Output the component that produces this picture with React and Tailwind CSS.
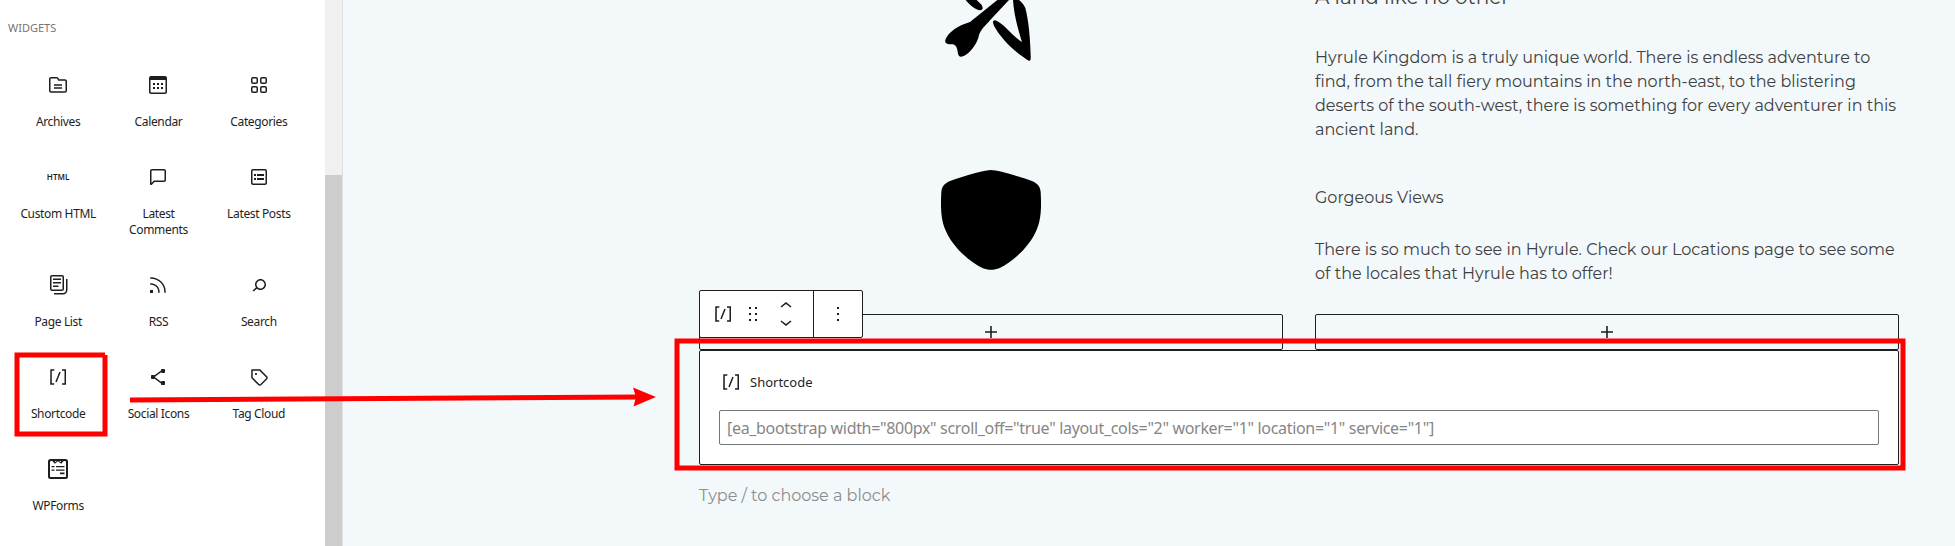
const ICONS = {
  archives: "M19 6.2h-5.9l-.6-1.1c-.3-.7-1-1.1-1.8-1.1H5c-1.1 0-2 .9-2 2v11.8c0 1.1.9 2 2 2h14c1.1 0 2-.9 2-2V8.2c0-1.1-.9-2-2-2zm.5 11.6c0 .3-.2.5-.5.5H5c-.3 0-.5-.2-.5-.5V6c0-.3.2-.5.5-.5h5.8c.2 0 .4.1.4.3l1 2H19c.3 0 .5.2.5.5v9.5zM8 12.8h8v-1.5H8v1.5zm0 3h8v-1.5H8v1.5z",
  calendar: "M19 3H5c-1.1 0-2 .9-2 2v14c0 1.1.9 2 2 2h14c1.1 0 2-.9 2-2V5c0-1.1-.9-2-2-2zm.5 16c0 .3-.2.5-.5.5H5c-.3 0-.5-.2-.5-.5V7h15v12zM9 10H7v2h2v-2zm0 4H7v2h2v-2zm4-4h-2v2h2v-2zm4 0h-2v2h2v-2zm-4 4h-2v2h2v-2zm4 0h-2v2h2v-2z",
  categories: "M6 5.5h3a.5.5 0 01.5.5v3a.5.5 0 01-.5.5H6a.5.5 0 01-.5-.5V6a.5.5 0 01.5-.5zM4 6a2 2 0 012-2h3a2 2 0 012 2v3a2 2 0 01-2 2H6a2 2 0 01-2-2V6zm11-.5h3a.5.5 0 01.5.5v3a.5.5 0 01-.5.5h-3a.5.5 0 01-.5-.5V6a.5.5 0 01.5-.5zM13 6a2 2 0 012-2h3a2 2 0 012 2v3a2 2 0 01-2 2h-3a2 2 0 01-2-2V6zm5 8.5h-3a.5.5 0 00-.5.5v3a.5.5 0 00.5.5h3a.5.5 0 00.5-.5v-3a.5.5 0 00-.5-.5zM15 13a2 2 0 00-2 2v3a2 2 0 002 2h3a2 2 0 002-2v-3a2 2 0 00-2-2h-3zm-9 1.5h3a.5.5 0 01.5.5v3a.5.5 0 01-.5.5H6a.5.5 0 01-.5-.5v-3a.5.5 0 01.5-.5zM4 15a2 2 0 012-2h3a2 2 0 012 2v3a2 2 0 01-2 2H6a2 2 0 01-2-2v-3z",
  comment: "M18 4H6c-1.1 0-2 .9-2 2v12.9c0 .6.5 1.1 1.1 1.1.3 0 .5-.1.8-.3L8.5 17H18c1.1 0 2-.9 2-2V6c0-1.1-.9-2-2-2zm.5 11c0 .3-.2.5-.5.5H7.9l-2.4 2.4V6c0-.3.2-.5.5-.5h12c.3 0 .5.2.5.5v9z",
  posts: "M18 4H6c-1.1 0-2 .9-2 2v12c0 1.1.9 2 2 2h12c1.1 0 2-.9 2-2V6c0-1.1-.9-2-2-2zm.5 14c0 .3-.2.5-.5.5H6c-.3 0-.5-.2-.5-.5V6c0-.3.2-.5.5-.5h12c.3 0 .5.2.5.5v12zM7 11h2V9H7v2zm0 4h2v-2H7v2zm3-4h7V9h-7v2zm0 4h7v-2h-7v2z",
  pages: "M7 5.5h8V7H7V5.5zM7 9h8v1.5H7V9zm0 3.5h5.5V14H7v-1.5zM16 2H6a2 2 0 00-2 2v12c0 1.1.9 2 2 2h10a2 2 0 002-2V4a2 2 0 00-2-2zM6 3.5h10a.5.5 0 01.5.5v12a.5.5 0 01-.5.5H6a.5.5 0 01-.5-.5V4a.5.5 0 01.5-.5zM20 6v11c0 1.7-1.3 3-3 3H8v1.5h9c2.5 0 4.5-2 4.5-4.5V6H20z",
  rss: "M5 10.2h-.8v1.5H5c1.9 0 3.8.8 5.1 2.1 1.4 1.4 2.1 3.2 2.1 5.1v.8h1.5V19c0-2.3-.9-4.5-2.6-6.2-1.6-1.6-3.8-2.6-6.1-2.6zm10.4-1.6C12.6 5.8 8.9 4.2 5 4.2h-.8v1.5H5c3.5 0 6.9 1.4 9.4 3.9s3.9 5.8 3.9 9.4v.8h1.5V19c0-3.9-1.6-7.6-4.4-10.4zM4 20h3v-3H4v3z",
  search: "M13.5 6C10.5 6 8 8.5 8 11.5c0 1.1.3 2.1.9 3l-3.4 3 1 1.1 3.4-2.9c1 .9 2.2 1.4 3.6 1.4 3 0 5.5-2.5 5.5-5.5C19 8.5 16.5 6 13.5 6zm0 9.5c-2.2 0-4-1.8-4-4s1.8-4 4-4 4 1.8 4 4-1.8 4-4 4z",
  shortcode: "M16 4.2v1.5h2.5v12.5H16v1.5h4V4.2h-4zM4.2 19.8h4v-1.5H5.8V5.8h2.5V4.2h-4l-.1 15.6zm5.1-3.1l1.4.6 4-10-1.4-.6-4 10z",
  share: "M9 11.8l6.1-4.5c.1.4.4.7.9.7h2c.6 0 1-.4 1-1V5c0-.6-.4-1-1-1h-2c-.6 0-1 .4-1 1v.4l-6.4 4.8c-.2-.1-.4-.2-.6-.2H6c-.6 0-1 .4-1 1v2c0 .6.4 1 1 1h2c.2 0 .4-.1.6-.2l6.4 4.8v.4c0 .6.4 1 1 1h2c.6 0 1-.4 1-1v-2c0-.6-.4-1-1-1h-2c-.5 0-.8.3-.9.7L9 12.2v-.4z",
  tag: "M20.1 11.2l-6.7-6.7c-.1-.1-.3-.2-.5-.2H5c-.4-.1-.8.3-.8.7v7.8c0 .2.1.4.2.5l6.7 6.7c.2.2.5.4.7.5s.6.2.9.2c.3 0 .6-.1.9-.2.3-.1.5-.3.8-.5l5.6-5.6c.4-.4.7-1 .7-1.6.1-.6-.2-1.2-.6-1.6zM19 13.4L13.4 19c-.1.1-.2.1-.3.2-.2.1-.4.1-.6 0-.1 0-.2-.1-.3-.2l-6.5-6.5V5.8h6.8l6.5 6.5c.2.2.2.4.2.6 0 .1 0 .3-.2.5zM9 8c-.6 0-1 .4-1 1s.4 1 1 1 1-.4 1-1-.4-1-1-1z",
  forms: "M4.5 2h15A2.5 2.5 0 0122 4.5v15a2.5 2.5 0 01-2.5 2.5h-15A2.5 2.5 0 012 19.5v-15A2.5 2.5 0 014.5 2zM4 5v14.5c0 .3.2.5.5.5h15c.3 0 .5-.2.5-.5V5l-.7-1h-1.6l-2.5 2.7L12 4.3 8.800 6.700 6.300 4H4.700zM8.600 4.100L9.400 5l1.400-1zM13.200 4l1.400 1 .8-.9zM5.500 9h3v1.300h-3zM10 9h8.500v1.300H10zM5.500 12.500h3v1.300h-3zM10 12.500h8.500v1.300H10zM14 15.500h4.500v1.700H14z",
  drag: "M8 7h2V5H8v2zm0 6h2v-2H8v2zm0 6h2v-2H8v2zm6-14v2h2V5h-2zm0 8h2v-2h-2v2zm0 6h2v-2h-2v2z",
  up: "M6.5 12.4L12 8l5.5 4.4-.9 1.2L12 10l-4.5 3.6-1-1.2z",
  down: "M17.5 11.6L12 16l-5.5-4.4.9-1.2L12 14l4.5-3.6 1 1.2z",
  more: "M13 19h-2v-2h2v2zm0-6h-2v-2h2v2zm0-6h-2V5h2v2z",
  plus: "M18 11.2h-5.2V6h-1.6v5.2H6v1.6h5.2V18h1.6v-5.2H18z",
};

function Icon({ name, className = "" }) {
  return (
    <svg viewBox="0 0 24 24" className={`size-6 shrink-0 ${className}`} fill="#1e1e1e" fillRule="evenodd">
      <path d={ICONS[name]} />
    </svg>
  );
}

const WIDGETS = [
  ["archives", "Archives"],
  ["calendar", "Calendar"],
  ["categories", "Categories"],
  ["html", "Custom HTML"],
  ["comment", "Latest Comments"],
  ["posts", "Latest Posts"],
  ["pages", "Page List"],
  ["rss", "RSS"],
  ["search", "Search"],
  ["shortcode", "Shortcode"],
  ["share", "Social Icons"],
  ["tag", "Tag Cloud"],
  ["forms", "WPForms"],
];

function Widget({ icon, label }) {
  return (
    <button className="flex flex-col items-center px-2 pt-[18px] pb-[17px]">
      {icon === "html" ? (
        <span className="flex h-6 items-center text-[8px] font-semibold tracking-[0.1px]">HTML</span>
      ) : (
        <Icon name={icon} />
      )}
      <span className="mt-[17px] text-center text-xs leading-4 tracking-[-0.35px]">{label}</span>
    </button>
  );
}

function Sidebar() {
  return (
    <aside className="flex shrink-0 border-r border-[#e0e0e0] bg-white font-['Noto_Sans',sans-serif] text-[#1e1e1e]">
      <div className="w-[325px] pl-2">
        <h2 className="pt-5 text-[11px] leading-4 font-normal text-[#757575]">WIDGETS</h2>
        <div className="mt-[19px] grid w-[301px] grid-cols-3">
          {WIDGETS.map(([icon, label]) => (
            <Widget key={label} icon={icon} label={label} />
          ))}
        </div>
      </div>
      <div className="w-[17px] bg-[#f0f0f0] pt-[175px]">
        <div className="h-full bg-[#cdcdcd]" />
      </div>
    </aside>
  );
}

function Appender() {
  return (
    <div className="flex h-9 items-center justify-center rounded-xs border border-[#1e1e1e]">
      <Icon name="plus" />
    </div>
  );
}

function Toolbar() {
  return (
    <div className="absolute top-[290px] left-[356px] flex h-12 w-[164px] rounded-xs border border-[#1e1e1e] bg-white">
      <div className="flex w-[114px] items-center border-r border-[#1e1e1e] pl-[11px]">
        <Icon name="shortcode" />
        <Icon name="drag" className="ml-1.5" />
        <div className="ml-[9px] flex flex-col">
          <Icon name="up" className="-mb-2" />
          <Icon name="down" />
        </div>
      </div>
      <div className="flex flex-1 items-center justify-center">
        <Icon name="more" />
      </div>
    </div>
  );
}

function Editor() {
  return (
    <main className="relative flex-1 overflow-hidden bg-[#f3f8fb] pl-[356px] font-['Montserrat',sans-serif] text-base leading-6 text-[#404040]">
      <div className="grid h-[350px] w-[1200px] grid-cols-2 gap-8">
        <div className="flex flex-col">
          <svg viewBox="3 0 420 210" className="h-[70px] w-[140px] self-center" fill="#000">
            <path d="M137 0C150 16 166 29 181 31C190 30 190 22 183 13L170 0z" />
            <path d="M232 0L150 66C115 76 86 96 77 117C71 132 85 133 98 133C119 137 108 169 122 170C142 171 173 132 177 105C184 86 196 78 210 61L267 0z" />
            <path d="M279 0C281 40 294 88 306 126C279 111 254 72 226 61C217 61 218 68 222 77C244 119 292 162 326 182C331 184 333 179 332 166C331 120 326 61 316 24C311 12 302 4 297 0z" />
          </svg>
          <svg viewBox="0 0 300 300" className="mt-[100px] size-[100px] self-center" fill="#000">
            <path d="M150 0C167 0 207 12 254 26C277 33 298 41 299 66C302 119 299 151 287 179C265 232 213 276 176 294C159 301 141 301 124 294C87 276 35 232 13 179C1 151-2 119 1 66C2 41 23 33 46 26C93 12 133 0 150 0z" />
          </svg>
          <div className="mt-11">
            <Appender />
          </div>
        </div>
        <div className="flex flex-col">
          <h3 className="-mt-4 text-[20px] leading-[26px] whitespace-nowrap">A land like no other</h3>
          <p className="mt-9">
            Hyrule Kingdom is a truly unique world. There is endless adventure to find, from the tall fiery mountains in the north-east, to the blistering deserts of the south-west, there is something for every adventurer in this ancient land.
          </p>
          <p className="mt-11">Gorgeous Views</p>
          <p className="mt-7">There is so much to see in Hyrule. Check our Locations page to see some of the locales that Hyrule has to offer!</p>
          <div className="mt-auto">
            <Appender />
          </div>
        </div>
      </div>

      <section className="h-[115px] w-[1200px] rounded-xs border border-[#1e1e1e] bg-white px-[19px] pt-[19px] font-['Noto_Sans',sans-serif]">
        <div className="flex items-center gap-[7px] text-[13px] text-[#1e1e1e]">
          <Icon name="shortcode" />
          <span>Shortcode</span>
        </div>
        <div className="mt-4 flex h-[35px] items-center rounded-xs border border-[#757575] px-[7px] tracking-[-0.32px] text-[#868686]">
          {'[ea_bootstrap width="800px" scroll_off="true" layout_cols="2" worker="1" location="1" service="1"]'}
        </div>
      </section>

      <p className="mt-[19px] text-[#8a8d8f]">Type / to choose a block</p>
      <Toolbar />
    </main>
  );
}

function Annotations() {
  return (
    <svg viewBox="0 0 1955 546" className="pointer-events-none absolute inset-0 h-[546px] w-[1955px]" fill="none" stroke="#ff0000" strokeWidth="5">
      <path d="M105 355H17V434H105V355" />
      <rect x="677" y="341" width="1226" height="127" />
      <path d="M130 400L640 397" />
      <path d="M633 387.500L656 397L633.500 406.500L636 397z" fill="#ff0000" stroke="none" />
    </svg>
  );
}

export default function App() {
  return (
    <div className="relative flex h-[546px] w-[1955px] overflow-hidden">
      <Sidebar />
      <Editor />
      <Annotations />
    </div>
  );
}
